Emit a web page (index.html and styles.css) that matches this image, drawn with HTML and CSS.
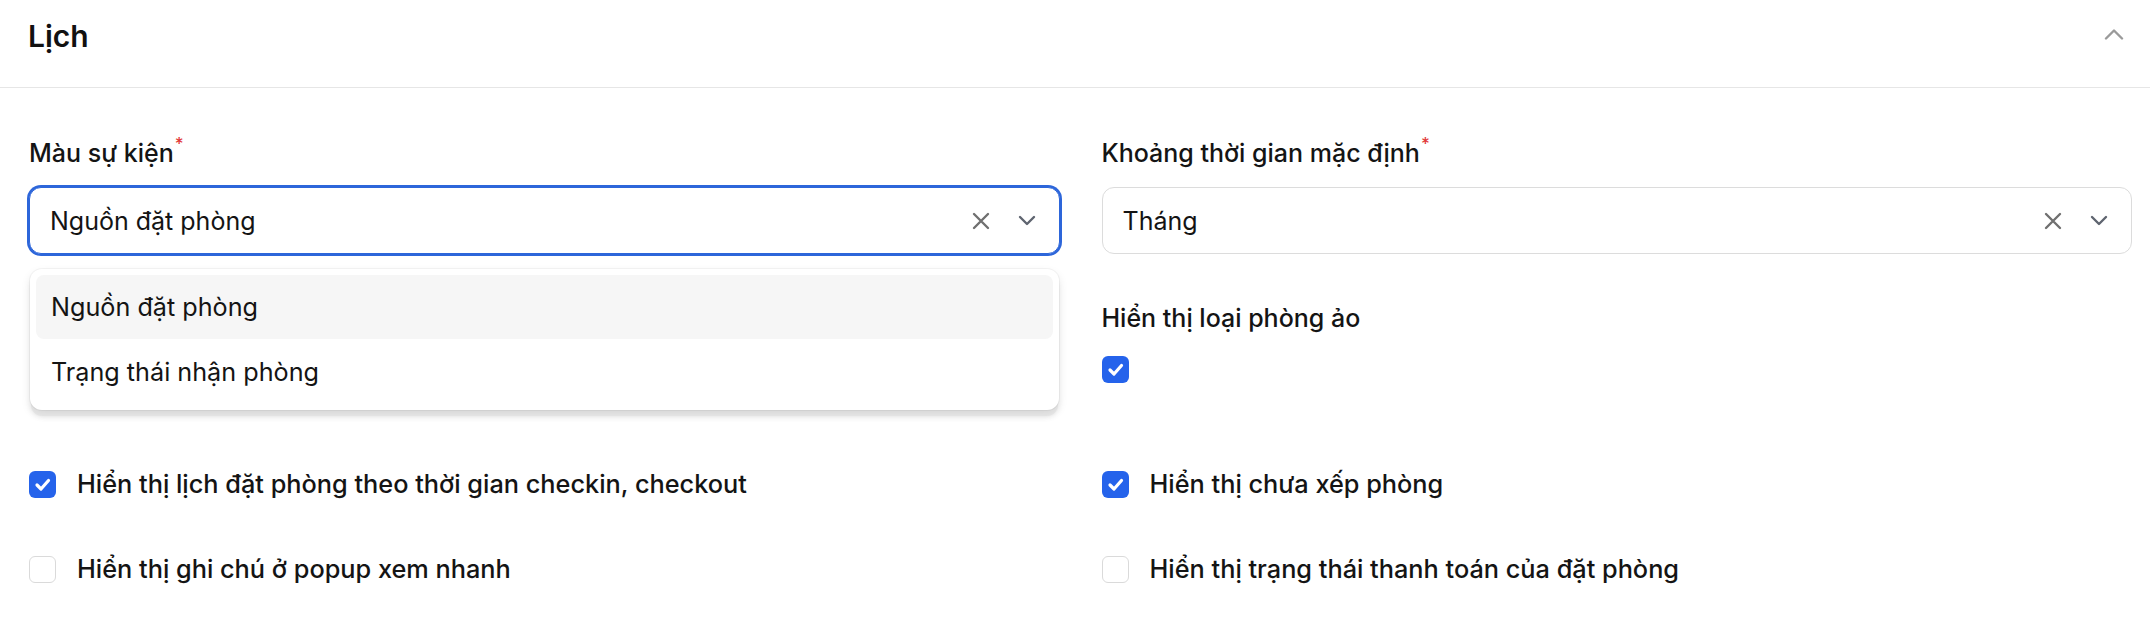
FILE: index.html
```html
<!DOCTYPE html>
<html lang="vi">
<head>
<meta charset="utf-8">
<title>Lịch</title>
<link rel="stylesheet" href="styles.css">
</head>
<body>
<section class="panel">
  <header class="panel-head">
    <h2 class="panel-title">Lịch</h2>
    <svg class="collapse-icon" width="20" height="12" viewBox="0 0 20 12"><path d="M2 10.5 L10 2.5 L18 10.5" fill="none" stroke="#9a9a9a" stroke-width="2.4" stroke-linecap="round" stroke-linejoin="round"/></svg>
  </header>
  <div class="panel-body">
    <div class="row row-first">
      <div class="field">
        <div class="label">Màu sự kiện<span class="req">*</span></div>
        <div class="select-wrap">
          <div class="select focused">
            <span class="value">Nguồn đặt phòng</span>
            <span class="icons">
              <svg class="ic-x" width="18" height="18" viewBox="0 0 18 18"><path d="M2 2 L16 16 M16 2 L2 16" stroke="#707070" stroke-width="2.4" stroke-linecap="round"/></svg>
              <svg class="ic-down" width="18" height="11" viewBox="0 0 18 11"><path d="M2 2 L9 9 L16 2" fill="none" stroke="#5f6570" stroke-width="2.4" stroke-linecap="round" stroke-linejoin="round"/></svg>
            </span>
          </div>
          <div class="menu">
            <div class="menu-item active">Nguồn đặt phòng</div>
            <div class="menu-item">Trạng thái nhận phòng</div>
          </div>
        </div>
      </div>
      <div class="field">
        <div class="label">Khoảng thời gian mặc định<span class="req">*</span></div>
        <div class="select-wrap">
          <div class="select">
            <span class="value">Tháng</span>
            <span class="icons">
              <svg class="ic-x" width="18" height="18" viewBox="0 0 18 18"><path d="M2 2 L16 16 M16 2 L2 16" stroke="#707070" stroke-width="2.4" stroke-linecap="round"/></svg>
              <svg class="ic-down" width="18" height="11" viewBox="0 0 18 11"><path d="M2 2 L9 9 L16 2" fill="none" stroke="#5f6570" stroke-width="2.4" stroke-linecap="round" stroke-linejoin="round"/></svg>
            </span>
          </div>
        </div>
      </div>
    </div>

    <div class="row row-second">
      <div class="field"></div>
      <div class="field">
        <div class="label">Hiển thị loại phòng ảo</div>
        <span class="check on"><svg width="27" height="27" viewBox="0 0 27 27"><path d="M8 14 L12 18 L19.5 9.5" fill="none" stroke="#fff" stroke-width="3.2" stroke-linecap="round" stroke-linejoin="round"/></svg></span>
      </div>
    </div>

    <div class="row row-third">
      <label class="check-item">
        <span class="check on"><svg width="27" height="27" viewBox="0 0 27 27"><path d="M8 14 L12 18 L19.5 9.5" fill="none" stroke="#fff" stroke-width="3.2" stroke-linecap="round" stroke-linejoin="round"/></svg></span>
        <span class="check-text">Hiển thị lịch đặt phòng theo thời gian checkin, checkout</span>
      </label>
      <label class="check-item">
        <span class="check on"><svg width="27" height="27" viewBox="0 0 27 27"><path d="M8 14 L12 18 L19.5 9.5" fill="none" stroke="#fff" stroke-width="3.2" stroke-linecap="round" stroke-linejoin="round"/></svg></span>
        <span class="check-text">Hiển thị chưa xếp phòng</span>
      </label>
    </div>

    <div class="row row-fourth">
      <label class="check-item">
        <span class="check off"></span>
        <span class="check-text">Hiển thị ghi chú ở popup xem nhanh</span>
      </label>
      <label class="check-item">
        <span class="check off"></span>
        <span class="check-text">Hiển thị trạng thái thanh toán của đặt phòng</span>
      </label>
    </div>
  </div>
</section>
</body>
</html>
```
FILE: styles.css
```css
* { box-sizing: border-box; }
html, body { margin: 0; padding: 0; background: #fff; }
body {
  font-family: Inter, "Noto Sans", "Liberation Sans", sans-serif;
  color: #141414;
  width: 2150px;
  height: 622px;
  overflow: hidden;
}
.panel { width: 100%; }
.panel-head {
  display: flex;
  justify-content: space-between;
  align-items: flex-start;
  height: 88px;
  padding: 14px 26px 0 28px;
  border-bottom: 1.5px solid #e6e6e6;
}
.panel-title {
  margin: 0;
  font-size: 30px;
  line-height: 45px;
  font-weight: 600;
  color: #111;
}
.collapse-icon { margin-top: 14px; }
.panel-body {
  padding: 47px 18px 0 29px;
}
.row {
  display: grid;
  grid-template-columns: 1fr 1fr;
  column-gap: 42px;
}
.row-second { margin-top: 46px; }
.row-third { margin-top: 83px; }
.row-fourth { margin-top: 49px; }
.field { min-width: 0; }
.label {
  font-size: 25px;
  line-height: 36px;
  font-weight: 500;
  color: #141414;
  margin-bottom: 16px;
}
.req {
  color: #e23b3b;
  font-size: 17px;
  vertical-align: 12px;
  margin-left: 1px;
  line-height: 0;
}
.select-wrap { position: relative; }
.select {
  display: flex;
  align-items: center;
  justify-content: space-between;
  height: 67px;
  padding: 0 23px 0 20px;
  border: 1.5px solid #dcdcdc;
  border-radius: 12px;
  background: #fff;
  font-size: 25px;
  font-weight: 400;
}
.select.focused {
  border-color: #2d66da;
  box-shadow: 0 0 0 2px #2d66da;
}
.icons {
  display: flex;
  align-items: center;
  gap: 28px;
}
.ic-x, .ic-down { display: block; }
.menu {
  position: absolute;
  top: calc(100% + 15px);
  left: 1px;
  right: 1px;
  background: #fff;
  border-radius: 12px;
  padding: 6px;
  box-shadow: 0 0 0 1px rgba(0,0,0,0.04), 0 4px 10px rgba(0,0,0,0.10), 0 7px 0 -1px #ececec, 0 8px 6px -2px rgba(0,0,0,0.10);
  z-index: 5;
}
.menu-item {
  display: flex;
  align-items: center;
  height: 64px;
  padding: 0 15px;
  border-radius: 8px;
  font-size: 25.2px;
  font-weight: 400;
  color: #141414;
}
.menu-item + .menu-item { height: 65px; }
.menu-item.active { background: #f6f6f6; }
.label + .check { margin-top: 20px; }
.check {
  display: block;
  width: 27px;
  height: 27px;
  border-radius: 6px;
  flex: none;
}
.check svg { display: block; }
.check.on { background: #2563eb; }
.check.off { background: #fff; border: 1.5px solid #dadada; }
.check-item {
  display: flex;
  align-items: center;
  gap: 21px;
  height: 36px;
}
.check-text {
  font-size: 25.3px;
  line-height: 36px;
  font-weight: 500;
  color: #141414;
}
```
